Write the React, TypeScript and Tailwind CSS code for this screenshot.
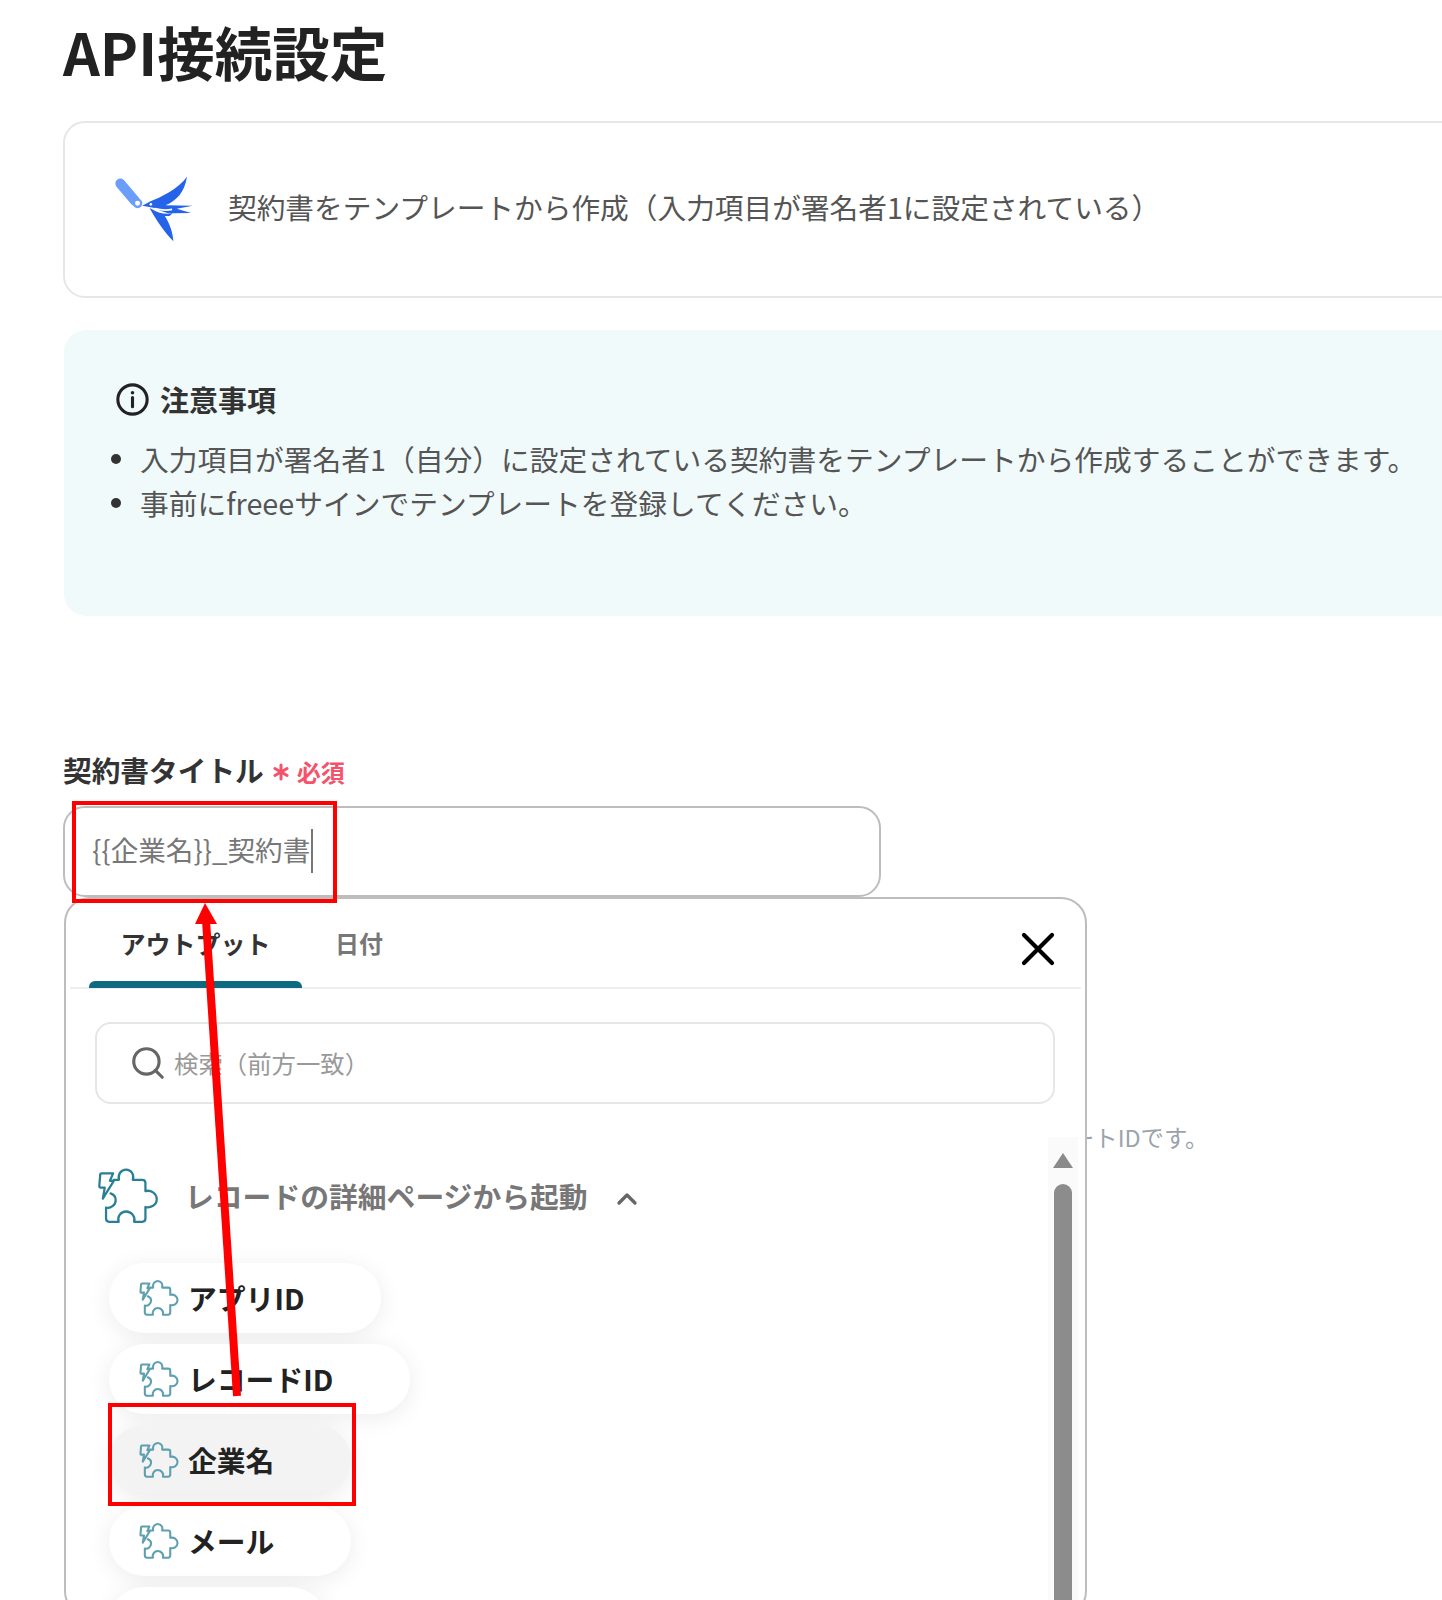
import { Search, X, ChevronUp, Asterisk } from "lucide-react";

const FONT = { fontFamily: '"Noto Sans CJK JP", "Noto Sans", sans-serif' };

const ITEMS = [
  { label: "アプリID" },
  { label: "レコードID" },
  { label: "企業名", active: true },
  { label: "メール" },
];

function PuzzleIcon({ className, strokeWidth }: { className: string; strokeWidth: number }) {
  return (
    <svg viewBox="20 55 192 174" fill="none" className={className} stroke="currentColor" strokeWidth={strokeWidth} strokeLinejoin="round" strokeLinecap="round">
      <path d="M34 72 H70 L60 95 H72 L38 150 L44 116 H30 Q27 116 27 112 L30 76 Q30 72 34 72 Z" />
      <path d="M72 92 H88 C84 76 94 60 110 60 C126 60 136 76 131 92 H160 Q170 92 170 102 V127 C186 122 205 134 205 152 C205 170 186 180 170 176 V212 Q170 222 160 222 H135 C140 205 126 190 110 190 C94 190 82 205 87 222 H58 Q48 222 48 212 V178 C62 182 78 170 78 154 C78 146 72 138 62 134" />
    </svg>
  );
}

function BirdLogo() {
  return (
    <svg viewBox="70 70 250 210" className="w-[83px] h-[70px] shrink-0 -ml-[2px] -mt-[2px]">
      <path d="M92 98 L136 150" stroke="#6b9dfb" strokeWidth="30" strokeLinecap="round" />
      <circle cx="144" cy="158" r="11" fill="#fff" stroke="#6b9dfb" strokeWidth="7" />
      <path d="M158 165 L180 153 C215 140 265 115 293 78 C285 125 262 150 228 164 L310 165 L262 174 L305 187 L250 188 C235 190 210 180 195 172 L175 168 Z" fill="#2563eb" />
      <path d="M192 178 C205 186 225 192 250 188 L240 196 L226 196 C242 220 250 248 252 272 C225 245 200 208 180 172 Z" fill="#2563eb" />
      <path d="M196 174 C212 178 230 180 248 176" stroke="#fff" strokeWidth="5" fill="none" />
      <circle cx="184" cy="161" r="4" fill="#fff" />
    </svg>
  );
}

export default function App() {
  return (
    <div className="relative w-[1442px] h-[1600px] overflow-hidden bg-white pl-[63px] pt-[13px] text-[#333]" style={FONT}>
      <h1 className="text-[57.5px] leading-[76px] font-bold text-[#222]">API接続設定</h1>

      {/* Action card */}
      <div className="mt-[32px] w-[1500px] h-[177px] flex items-center gap-[32px] pl-[50px] border-2 border-[#e6e6e6] rounded-[22px]">
        <BirdLogo />
        <span className="text-[28.7px] leading-none text-[#555] -mt-[4px]">契約書をテンプレートから作成（入力項目が署名者1に設定されている）</span>
      </div>

      {/* Notice */}
      <div className="mt-[32px] ml-[1px] w-[1500px] h-[286px] bg-[#f1fafa] rounded-[22px] pl-[52px] pt-[51px]">
        <div className="flex items-center gap-[11px] h-[36px]">
          <svg viewBox="0 0 32 32" fill="none" className="w-[33px] h-[33px]" stroke="#222" strokeWidth="3">
            <circle cx="16" cy="16" r="14.2" />
            <path d="M16 14 V23" strokeLinecap="round" />
            <circle cx="16" cy="9.5" r="1.7" fill="#222" stroke="none" />
          </svg>
          <span className="text-[29px] font-bold leading-none text-[#333]">注意事項</span>
        </div>
        <ul className="mt-[20px] text-[28.75px] leading-[44px] text-[#555]">
          <li className="flex items-center">
            <span className="w-[10px] h-[10px] rounded-full bg-[#333] ml-[-5px] mr-[19px]" />
            入力項目が署名者1（自分）に設定されている契約書をテンプレートから作成することができます。
          </li>
          <li className="flex items-center">
            <span className="w-[10px] h-[10px] rounded-full bg-[#333] ml-[-5px] mr-[19px]" />
            事前にfreeeサインでテンプレートを登録してください。
          </li>
        </ul>
      </div>

      {/* Title field */}
      <div className="mt-[134px] flex items-center h-[40px]">
        <span className="text-[28.7px] font-bold leading-none text-[#333]">契約書タイトル</span>
        <span className="ml-[3px] mt-[4px] flex items-center gap-[2px] text-[#f4536b] font-bold">
          <Asterisk className="w-[28px] h-[28px]" strokeWidth={2.6} />
          <span className="text-[24px] leading-none">必須</span>
        </span>
      </div>
      <div className="mt-[16px] w-[818px] h-[91px] border-2 border-[#bdbdbd] rounded-[22px] flex items-center pl-[27px]">
        <span className="text-[27.6px] leading-none text-[#777] -mt-[4px]">{"{{企業名}}_契約書"}</span>
        <span className="w-[2px] h-[44px] bg-[#777] ml-[1px] -mt-[2px]" />
      </div>

      {/* Helper text behind the popup */}
      <span className="absolute left-[978px] top-[1122px] text-[23.4px] leading-[30px] text-[#9aa3ad] whitespace-nowrap">テンプレートIDです。</span>

      {/* Output popup */}
      <div className="relative z-10 ml-[1px] w-[1023px] h-[720px] bg-white border-2 border-[#bdbdbd] rounded-[26px] px-[4px]">
        <div className="relative h-[90px] flex border-b-2 border-[#eeeeee]">
          <div className="relative ml-[19px] w-[213px] flex items-center justify-center">
            <span className="text-[25px] font-bold text-[#333] leading-none">アウトプット</span>
            <span className="absolute left-0 right-0 bottom-[-1px] h-[7px] bg-[#0e6a80] rounded-t-[6px]" />
          </div>
          <div className="ml-[33px] flex items-center">
            <span className="text-[24px] font-bold text-[#777] leading-none">日付</span>
          </div>
          <X className="absolute right-[15px] top-[22px] w-[56px] h-[56px] text-black" strokeWidth={1.8} />
        </div>

        <div className="mt-[33px] ml-[25px] w-[960px] h-[82px] border-2 border-[#e6e6e6] rounded-[16px] flex items-center pl-[32px] gap-[7px]">
          <Search className="w-[38px] h-[38px] text-[#666]" strokeWidth={2} />
          <span className="text-[24.4px] leading-none text-[#999]">検索（前方一致）</span>
        </div>

        <div className="mt-[33px] flex">
          <div className="flex-1 pt-[29px]">
            <div className="flex items-center h-[60px] ml-[27px]">
              <PuzzleIcon className="w-[62px] h-[60px] text-[#2a7f94]" strokeWidth={7} />
              <span className="ml-[26px] text-[28.8px] font-semibold leading-none text-[#777]">レコードの詳細ページから起動</span>
              <ChevronUp className="ml-[23px] mt-[6px] w-[32px] h-[32px] text-[#666]" strokeWidth={2.5} />
            </div>
            <div className="mt-[37px] ml-[39px] flex flex-col items-start gap-[11px]">
              {ITEMS.map((item) => (
                <div
                  key={item.label}
                  className={`h-[70px] flex items-center rounded-full pl-[30px] pr-[77px] shadow-[0_4px_24px_rgba(0,0,0,0.08)] ${
                    item.active ? "bg-[#f3f3f3]" : "bg-white"
                  }`}
                >
                  <PuzzleIcon className="w-[40px] h-[38px] text-[#5e9fb0] shrink-0" strokeWidth={10} />
                  <span className="ml-[9px] text-[28.8px] font-semibold leading-none text-[#222]">{item.label}</span>
                </div>
              ))}
              <div className="w-[217px] h-[70px] rounded-full bg-white shadow-[0_4px_24px_rgba(0,0,0,0.08)]" />
            </div>
          </div>

          {/* Scrollbar */}
          <div className="w-[30px] mr-[3px] h-[470px] bg-[#fafafa] flex flex-col items-center pt-[16px]">
            <span className="w-0 h-0 border-l-[10px] border-r-[10px] border-b-[15px] border-l-transparent border-r-transparent border-b-[#8a8a8a]" />
            <span className="mt-[16px] w-[18px] flex-1 bg-[#8c8c8c] rounded-t-[9px]" />
          </div>
        </div>
      </div>

      {/* Annotations */}
      <div className="absolute z-20 left-[72px] top-[801px] w-[265px] h-[102px] border-[4px] border-[#ff0000]" />
      <div className="absolute z-20 left-[108px] top-[1403px] w-[248px] h-[103px] border-[4px] border-[#ff0000]" />
      <svg className="absolute z-20 left-0 top-0 w-[1442px] h-[1600px] pointer-events-none" viewBox="0 0 1442 1600">
        <path d="M237 1396 L206 920" stroke="#ff0000" strokeWidth="8" />
        <path d="M205 903 L217 924 L195 924 Z" fill="#ff0000" />
      </svg>
    </div>
  );
}
